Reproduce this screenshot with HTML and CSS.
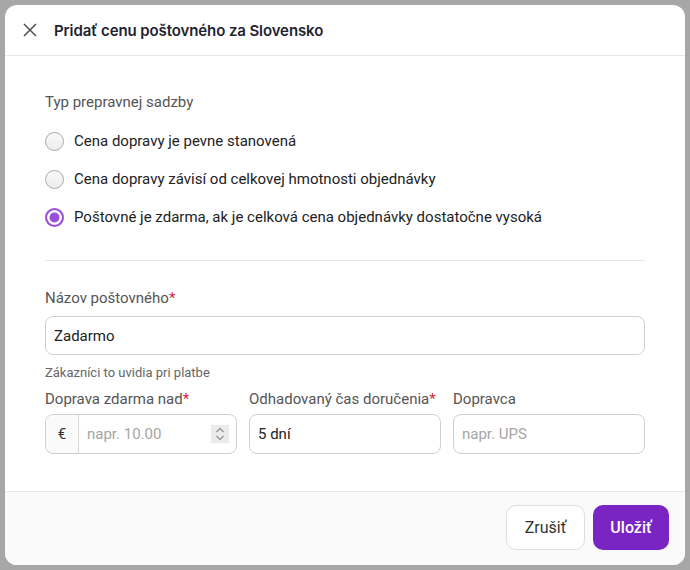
FILE: index.html
```html
<!DOCTYPE html>
<html lang="sk">
<head>
<meta charset="utf-8">
<link rel="stylesheet" href="styles.css">
</head>
<body>
<div class="dialog">
  <header class="head">
    <button class="close" aria-label="Zavrieť">
      <svg width="14" height="14" viewBox="0 0 14 14"><path d="M1 1L13 13M13 1L1 13" stroke="#555" stroke-width="1.6" fill="none"/></svg>
    </button>
    <h1 class="title">Pridať cenu poštovného za Slovensko</h1>
  </header>
  <main class="body">
    <div class="group-label">Typ prepravnej sadzby</div>
    <div class="radios">
      <label class="radio"><span class="dot"></span>Cena dopravy je pevne stanovená</label>
      <label class="radio"><span class="dot"></span>Cena dopravy závisí od celkovej hmotnosti objednávky</label>
      <label class="radio"><span class="dot on"></span>Poštovné je zdarma, ak je celková cena objednávky dostatočne vysoká</label>
    </div>
    <hr class="sep">
    <div class="field">
      <div class="label">Názov poštovného<span class="req">*</span></div>
      <div class="input big">Zadarmo</div>
      <div class="help">Zákazníci to uvidia pri platbe</div>
    </div>
    <div class="row">
      <div class="field">
        <div class="label">Doprava zdarma nad<span class="req">*</span></div>
        <div class="input split">
          <span class="prefix">€</span>
          <span class="ph grow">napr. 10.00</span>
          <span class="spin"><svg width="12" height="16" viewBox="0 0 12 16"><path d="M2.5 6L6 2.5L9.5 6M2.5 10L6 13.5L9.5 10" stroke="#8a8a8a" stroke-width="1.1" fill="none"/></svg></span>
        </div>
      </div>
      <div class="field">
        <div class="label">Odhadovaný čas doručenia<span class="req">*</span></div>
        <div class="input">5 dní</div>
      </div>
      <div class="field">
        <div class="label">Dopravca</div>
        <div class="input"><span class="ph">napr. UPS</span></div>
      </div>
    </div>
  </main>
  <footer class="foot">
    <button class="btn ghost">Zrušiť</button>
    <button class="btn primary">Uložiť</button>
  </footer>
</div>
</body>
</html>
```
FILE: styles.css
```css
* { box-sizing: border-box; }
html, body { margin: 0; height: 100%; }
body {
  background: #a7a7a7;
  padding: 5px;
  font-family: Roboto, "Noto Sans", sans-serif;
  color: #222;
}
.dialog {
  width: 680px;
  height: 560px;
  background: #fff;
  border-radius: 12px;
  overflow: hidden;
  display: flex;
  flex-direction: column;
}
.head {
  height: 51px;
  flex: none;
  display: flex;
  align-items: center;
  gap: 16px;
  padding: 0 17px;
  border-bottom: 1px solid #e8e8e8;
}
.close {
  border: 0;
  background: none;
  padding: 0;
  width: 16px;
  height: 16px;
  display: flex;
  align-items: center;
  justify-content: center;
}
.title {
  margin: 0;
  font-family: Inter, sans-serif;
  font-weight: 600;
  font-size: 15px;
  color: #1f2330;
  letter-spacing: -0.1px;
}
.body {
  flex: 1;
  padding: 36px 40px 0;
}
.group-label {
  font-size: 15px;
  color: #555;
  line-height: 20px;
}
.radios {
  margin-top: 19px;
  display: flex;
  flex-direction: column;
  gap: 18px;
}
.radio {
  display: flex;
  align-items: center;
  gap: 10px;
  font-size: 15px;
  line-height: 20px;
  color: #222;
}
.dot {
  width: 19px;
  height: 19px;
  border-radius: 50%;
  border: 1px solid #a9a9a9;
  background: linear-gradient(#fafafa, #ececec);
  flex: none;
}
.dot.on {
  border: 2px solid #9a4fd8;
  background: #fff;
  box-shadow: inset 0 0 0 2.5px #fff, inset 0 0 0 9px #9a4fd8;
}
.sep {
  border: 0;
  border-top: 1px solid #e6e6e6;
  margin: 33px 0 27px;
}
.label {
  font-size: 15px;
  color: #555;
  line-height: 20px;
  margin-bottom: 8px;
}
.row .label { margin-bottom: 5px; }
.req { color: #e0263a; }
.input {
  height: 40px;
  border: 1px solid #cfcfcf;
  border-radius: 8px;
  display: flex;
  align-items: center;
  padding: 0 8px;
  font-size: 15px;
  color: #222;
}
.input.big { height: 39px; }
.ph { color: #a5a5a5; }
.help {
  font-size: 13px;
  color: #666;
  margin-top: 9px;
  line-height: 18px;
}
.row {
  display: grid;
  grid-template-columns: repeat(3, 1fr);
  gap: 12px;
  margin-top: 7px;
}
.split { padding: 0; }
.prefix {
  width: 33px;
  height: 100%;
  display: flex;
  align-items: center;
  justify-content: center;
  border-right: 1px solid #d6d6d6;
  background: #fafafa;
  border-radius: 8px 0 0 8px;
  color: #333;
}
.grow { flex: 1; padding-left: 8px; }
.spin {
  width: 18px;
  height: 18px;
  background: #ebebeb;
  display: flex;
  align-items: center;
  justify-content: center;
  margin-right: 7px;
}
.foot {
  height: 74px;
  flex: none;
  background: #fafafa;
  border-top: 1px solid #e8e8e8;
  display: flex;
  justify-content: flex-end;
  align-items: center;
  gap: 8px;
  padding: 0 16px 2px;
}
.btn {
  font-family: Roboto, sans-serif;
  font-size: 16px;
  height: 45px;
  border-radius: 10px;
  padding: 0 17px;
  cursor: pointer;
}
.ghost {
  background: #fff;
  border: 1px solid #dedede;
  color: #333;
  width: 79px;
}
.primary {
  background: #7a24c3;
  border: 0;
  color: #fff;
  font-weight: 500;
  width: 76px;
}
```
